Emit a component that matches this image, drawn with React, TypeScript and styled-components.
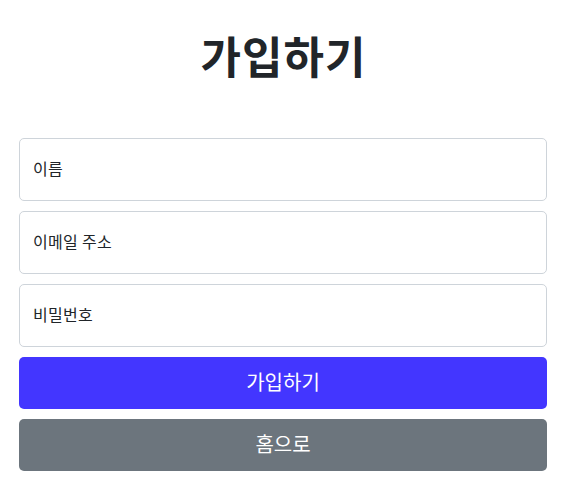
import * as React from "react";
import styled, { createGlobalStyle } from "styled-components";

const GlobalStyle = createGlobalStyle`
    html, body {
        margin: 0;
        padding: 0;
        background: #ffffff;
        font-family: "Noto Sans CJK KR", "Noto Sans", sans-serif;
        color: #212529;
    }
    * {
        box-sizing: border-box;
    }
`;

const Page = styled.div`
    display: flex;
    flex-direction: column;
    padding: 31px 19px 0;
`;

const Title = styled.h1`
    margin: 0 0 59px;
    padding-left: 1px;
    font-size: 44px;
    line-height: 48px;
    font-weight: 700;
    letter-spacing: 1px;
    text-align: center;
    color: #212529;
`;

const Form = styled.form`
    display: flex;
    flex-direction: column;
    gap: 10px;
`;

const Input = styled.input`
    display: block;
    width: 100%;
    height: 63px;
    padding: 0 13px 3px;
    border: 1px solid #ced4da;
    border-radius: 5px;
    font-family: inherit;
    font-size: 16px;
    letter-spacing: 0.3px;
    color: #212529;
    background: #fff;
    outline: none;
    &::placeholder {
        color: #212529;
    }
`;

const Button = styled.button<{ $variant: "primary" | "secondary" }>`
    display: block;
    width: 100%;
    height: 52px;
    padding: 0 0 3px;
    border: none;
    border-radius: 5px;
    font-family: inherit;
    font-size: 20px;
    color: #ffffff;
    cursor: pointer;
    background: ${p => (p.$variant === "primary" ? "#4336ff" : "#6c757d")};
`;

export default function App() {
    return (
        <>
            <GlobalStyle />
            <Page>
                <Title>가입하기</Title>
                <Form onSubmit={e => e.preventDefault()}>
                    <Input type="text" placeholder="이름" />
                    <Input type="email" placeholder="이메일 주소" />
                    <Input type="password" placeholder="비밀번호" />
                    <Button type="submit" $variant="primary">
                        가입하기
                    </Button>
                    <Button type="button" $variant="secondary">
                        홈으로
                    </Button>
                </Form>
            </Page>
        </>
    );
}
